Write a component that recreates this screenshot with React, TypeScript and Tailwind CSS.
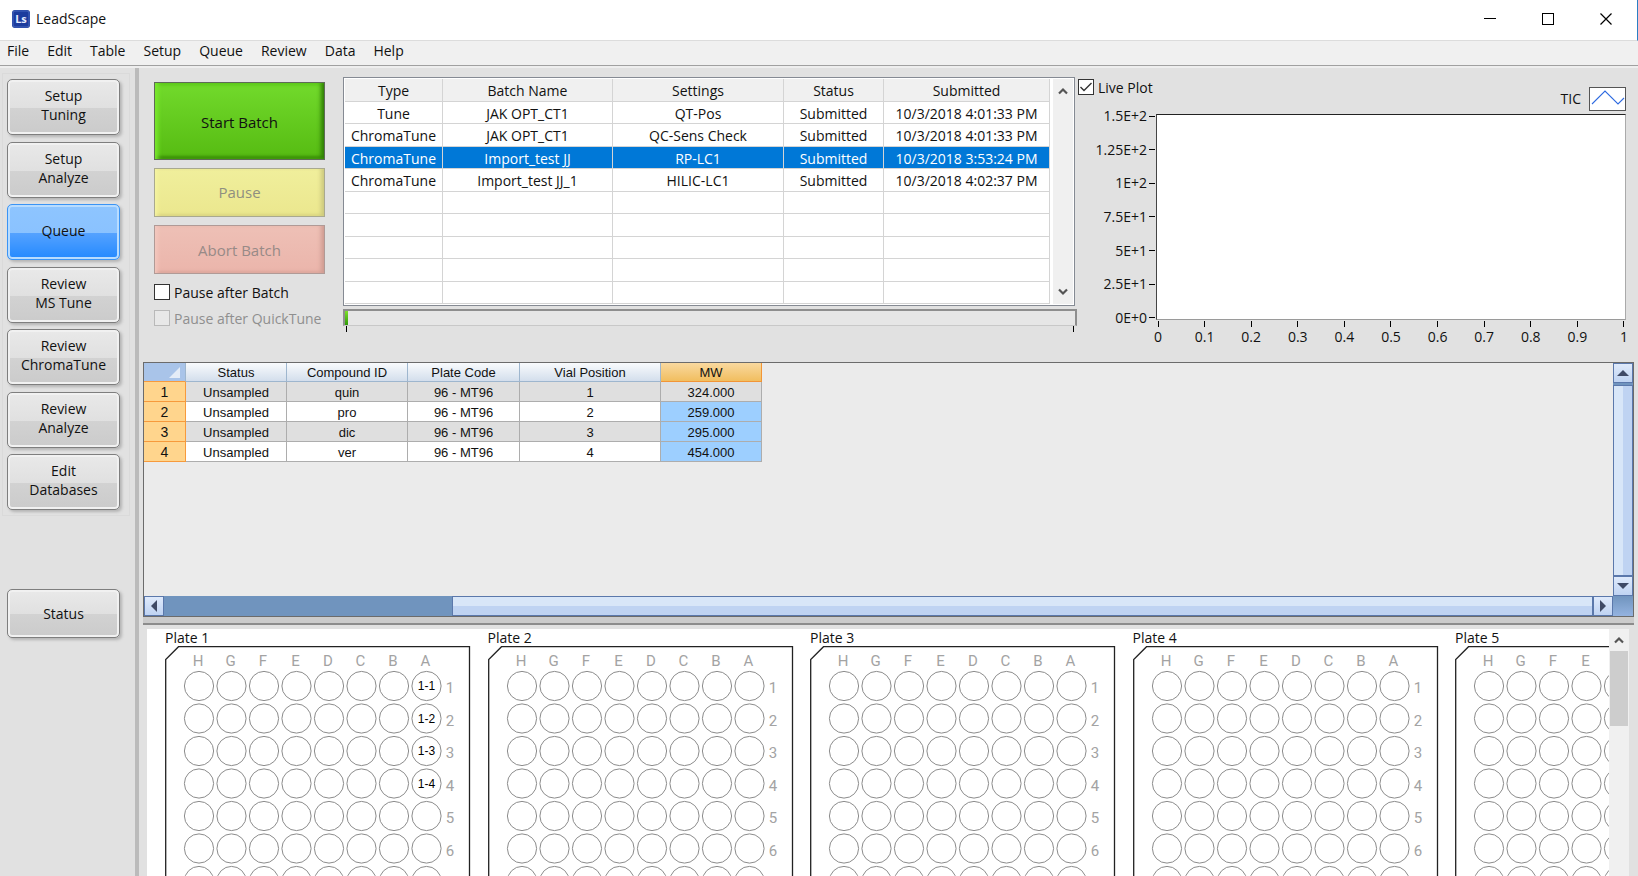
import { ReactNode, useState } from 'react'
import clsx from 'clsx'

interface Batch {
  type: string
  name: string
  settings: string
  status: string
  submitted: string
}

interface Sample {
  status: string
  compound: string
  plate: string
  vial: number
  mw: string
}

const MENU = ['File', 'Edit', 'Table', 'Setup', 'Queue', 'Review', 'Data', 'Help']

const NAV = [
  ['Setup', 'Tuning'],
  ['Setup', 'Analyze'],
  ['Queue'],
  ['Review', 'MS Tune'],
  ['Review', 'ChromaTune'],
  ['Review', 'Analyze'],
  ['Edit', 'Databases']
]

const BATCHES: Batch[] = [
  { type: 'Tune', name: 'JAK OPT_CT1', settings: 'QT-Pos', status: 'Submitted', submitted: '10/3/2018 4:01:33 PM' },
  { type: 'ChromaTune', name: 'JAK OPT_CT1', settings: 'QC-Sens Check', status: 'Submitted', submitted: '10/3/2018 4:01:33 PM' },
  { type: 'ChromaTune', name: 'Import_test JJ', settings: 'RP-LC1', status: 'Submitted', submitted: '10/3/2018 3:53:24 PM' },
  { type: 'ChromaTune', name: 'Import_test JJ_1', settings: 'HILIC-LC1', status: 'Submitted', submitted: '10/3/2018 4:02:37 PM' }
]

const SAMPLES: Sample[] = [
  { status: 'Unsampled', compound: 'quin', plate: '96 - MT96', vial: 1, mw: '324.000' },
  { status: 'Unsampled', compound: 'pro', plate: '96 - MT96', vial: 2, mw: '259.000' },
  { status: 'Unsampled', compound: 'dic', plate: '96 - MT96', vial: 3, mw: '295.000' },
  { status: 'Unsampled', compound: 'ver', plate: '96 - MT96', vial: 4, mw: '454.000' }
]

const Y_TICKS = ['1.5E+2', '1.25E+2', '1E+2', '7.5E+1', '5E+1', '2.5E+1', '0E+0']
const X_TICKS = ['0', '0.1', '0.2', '0.3', '0.4', '0.5', '0.6', '0.7', '0.8', '0.9', '1']

const TitleBar = () => (
  <header className="flex h-[41px] shrink-0 items-stretch border-b border-r border-b-[#dcdcdc] border-r-[#2a7fc4] bg-white pb-[2px] pr-[2px]">
    <div className="flex flex-1 items-center gap-[6px] pl-3">
      <svg width="18" height="18" viewBox="0 0 18 18">
        <rect width="18" height="18" rx="3" fill="#1c3c9e" />
        <rect x="1" y="1" width="16" height="16" rx="2" fill="none" stroke="#4766bd" />
        <text x="9" y="13" textAnchor="middle" fontSize="11" fontWeight="700" fill="#e6ecff">Ls</text>
      </svg>
      <h1 className="text-sm">LeadScape</h1>
    </div>
    <button aria-label="Minimize" className="flex w-[58px] items-center justify-center">
      <svg width="12" height="12"><path d="M0 5.5H12" stroke="#000" /></svg>
    </button>
    <button aria-label="Maximize" className="flex w-[58px] items-center justify-center">
      <svg width="12" height="12"><rect x=".5" y=".5" width="11" height="11" fill="none" stroke="#000" /></svg>
    </button>
    <button aria-label="Close" className="flex w-[58px] items-center justify-center">
      <svg width="12" height="12"><path d="M.5 .5L11.5 11.5M11.5 .5L.5 11.5" stroke="#000" strokeWidth="1.2" /></svg>
    </button>
  </header>
)

const MenuBar = () => (
  <nav className="flex h-[25px] shrink-0 items-center gap-[18px] border-b border-[#a0a0a0] bg-[#f0f0f0] pb-1 pl-[7px]">
    {MENU.map((m) => (
      <button key={m} className="text-sm">{m}</button>
    ))}
  </nav>
)

const NavButton = ({ active, tall = true, onClick, children }: {
  active?: boolean
  tall?: boolean
  onClick?: () => void
  children: ReactNode
}) => (
  <button
    onClick={onClick}
    className={clsx(
      'flex w-[113px] shrink-0 flex-col items-center justify-center rounded-[5px] border text-sm leading-[19px]',
      tall ? 'h-14 pb-1' : 'h-[49px]',
      active
        ? 'border-[#3a94f5] bg-[linear-gradient(#8ec5ff_0%,#8ac2ff_52%,#55a2ff_52%,#2389ff_100%)] shadow-[inset_0_0_0_2px_#b8dcff,2px_2px_3px_#b4b4b4]'
        : 'border-[#7e7e7e] bg-[linear-gradient(#e9e9e9_0%,#e0e0e0_52%,#d2d2d2_52%,#cbcbcb_100%)] shadow-[inset_0_0_0_2px_#f1f1f1,2px_2px_3px_#b4b4b4]'
    )}
  >
    {children}
  </button>
)

const Sidebar = () => {
  const [current, setCurrent] = useState(2)

  return (
    <aside className="flex w-[139px] shrink-0 flex-col border-r-4 border-[#bbbbbb] pl-[2px] pt-[5px]">
      <div className="flex h-[443px] w-[128px] flex-col justify-between border border-[#dadada] py-[5px] pl-1">
        {NAV.map((lines, i) => (
          <NavButton key={i} active={i === current} onClick={() => setCurrent(i)}>
            {lines.map((l) => (
              <span key={l}>{l}</span>
            ))}
          </NavButton>
        ))}
      </div>
      <div className="pl-[5px] pt-[73px]">
        <NavButton tall={false}>Status</NavButton>
      </div>
    </aside>
  )
}

const Check = ({ label, checked, disabled }: { label: string; checked?: boolean; disabled?: boolean }) => (
  <label className={clsx('flex h-4 items-center gap-1 text-sm', disabled && 'text-[#8f8f8f]')}>
    <span className="relative block h-4 w-4 shrink-0">
      <input
        type="checkbox"
        defaultChecked={checked}
        disabled={disabled}
        className="peer block h-4 w-4 appearance-none border border-[#333] bg-white disabled:border-[#b9b9b9] disabled:bg-[#e8e8e8]"
      />
      <svg className="pointer-events-none absolute inset-0 hidden peer-checked:block" width="16" height="16">
        <path d="M2.5 8L6 11.5L13.5 4" fill="none" stroke="#333" strokeWidth="1.4" />
      </svg>
    </span>
    <span className="whitespace-nowrap pt-[2px]">{label}</span>
  </label>
)

const BatchControls = () => (
  <div className="flex w-[171px] shrink-0 flex-col pt-[5px]">
    <button className="h-[78px] border border-[#5e6b57] bg-[linear-gradient(#72da2c,#56bb12)] pt-[2px] text-[15px] shadow-[inset_5px_0_4px_-2px_#7bea2e,inset_-5px_0_4px_-2px_#2f7d05,inset_0_-4px_3px_-1px_#3a8f08,inset_0_4px_4px_-2px_#5ccc18]">
      Start Batch
    </button>
    <button
      disabled
      className="mt-2 h-[49px] border border-[#a9a98f] bg-[linear-gradient(#f0ef9c,#ebe78e)] text-[15px] text-[#8f8f80] shadow-[inset_5px_0_4px_-3px_#f7f6a4,inset_-5px_0_4px_-2px_#ccc87e,inset_0_-3px_3px_-1px_#dbd783]"
    >
      Pause
    </button>
    <button
      disabled
      className="mt-2 h-[49px] border border-[#b09a96] bg-[linear-gradient(#eec0b6,#ebb5ab)] pt-[2px] text-[15px] text-[#988a87] shadow-[inset_5px_0_4px_-3px_#f5cbc2,inset_-5px_0_4px_-2px_#cf9c92,inset_0_-3px_3px_-1px_#dda79d]"
    >
      Abort Batch
    </button>
    <div className="mt-[10px] flex flex-col gap-[10px]">
      <Check label="Pause after Batch" />
      <Check label="Pause after QuickTune" disabled />
    </div>
  </div>
)

const Chevron = ({ down }: { down?: boolean }) => (
  <svg width="10" height="8" className={down ? 'rotate-180' : ''}>
    <path d="M1 6.5L5 2.5L9 6.5" fill="none" stroke="#555" strokeWidth="2.2" />
  </svg>
)

const BatchTable = () => {
  const [selected, setSelected] = useState(2)
  const cell = 'h-[22px] overflow-hidden whitespace-nowrap border-b border-r border-[#d4d4d4] p-0 pt-[2px] text-center font-normal'
  // the grid always shows nine lines, filled or not
  const rows = Array.from({ length: 9 }, (_, i) => BATCHES[i])

  return (
    <div className="w-[734px] shrink-0">
      <div className="flex w-[732px] border border-[#858a93] bg-white p-px">
        <table className="h-[225px] w-[705px] table-fixed border-separate border-spacing-0 text-sm leading-[19px]">
          <colgroup>
            <col className="w-[98px]" />
            <col className="w-[170px]" />
            <col className="w-[171px]" />
            <col className="w-[100px]" />
            <col className="w-[166px]" />
          </colgroup>
          <tbody>
            <tr className="bg-[#f0f0f0]">
              {['Type', 'Batch Name', 'Settings', 'Status', 'Submitted'].map((h) => (
                <th key={h} scope="col" className={cell}>{h}</th>
              ))}
            </tr>
            {rows.map((b, i) => (
              <tr
                key={i}
                onClick={() => b && setSelected(i)}
                className={i === selected ? 'bg-[#0078d7] text-white' : ''}
              >
                <td className={cell}>{b?.type}</td>
                <td className={cell}>{b?.name}</td>
                <td className={cell}>{b?.settings}</td>
                <td className={cell}>{b?.status}</td>
                <td className={cell}>{b?.submitted}</td>
              </tr>
            ))}
          </tbody>
        </table>
        <div className="ml-[3px] flex w-5 flex-col items-center justify-between bg-[#f0f0f0] py-2">
          <button aria-label="Scroll up"><Chevron /></button>
          <button aria-label="Scroll down"><Chevron down /></button>
        </div>
      </div>
      <div className="mt-[3px] flex h-[17px] border-2 border-b border-[#8e8e8e] border-b-[#c8c8c8] bg-[#e6e6e6]">
        <div className="w-[3px] bg-[linear-gradient(#7fe02c,#2f9a08)]" />
      </div>
      <div className="flex justify-between px-[3px]">
        <span className="h-[6px] w-px bg-black" />
        <span className="h-[6px] w-px bg-black" />
      </div>
    </div>
  )
}

const LivePlot = () => (
  <div className="ml-px flex min-w-0 flex-1 flex-col pr-2 text-sm">
    <div className="flex h-[34px] justify-between">
      <div className="pt-[2px]">
        <Check label="Live Plot" checked />
      </div>
      <div className="flex items-center gap-2 self-end">
        <span>TIC</span>
        <svg width="37" height="24">
          <rect x=".5" y=".5" width="36" height="23" fill="#fff" stroke="#555" />
          <path d="M3 17L16 4L29 17L35 11" fill="none" stroke="#2f6be0" strokeWidth="1.1" />
        </svg>
      </div>
    </div>
    <div className="mt-[3px] flex h-[206px]">
      <div className="-my-2 flex w-[78px] shrink-0 flex-col justify-between">
        {Y_TICKS.map((t) => (
          <div key={t} className="flex h-5 items-center justify-end gap-[2px]">
            <span>{t}</span>
            <span className="mr-px h-px w-[6px] bg-black" />
          </div>
        ))}
      </div>
      <div className="flex-1 border border-b-[#9a9a9a] border-l-[#444] border-r-[#aaa] border-t-[#222] bg-white" />
    </div>
    <div className="ml-20 mr-[2px] mt-px flex justify-between">
      {X_TICKS.map((t) => (
        <div key={t} className="flex w-0 flex-col items-center">
          <span className="h-[6px] w-px bg-black" />
          <span className="leading-[20px]">{t}</span>
        </div>
      ))}
    </div>
  </div>
)

const Arrow = ({ d }: { d: string }) => (
  <svg width="12" height="12">
    <path d={d} fill="#3f4a66" />
  </svg>
)

const SampleSheet = () => {
  const head = 'h-[19px] border-b border-r border-[#9eb6ce] bg-[linear-gradient(#f9fbfd,#d3deec)] p-0 pt-[2px] text-center font-normal leading-4'
  const cell = 'h-5 border-b border-r border-[#adadad] p-0 pt-[2px] text-center'
  const button = 'flex shrink-0 items-center justify-center border border-[#5b78ab] bg-[linear-gradient(#dfeafb,#bfd3f2)]'

  return (
    <section className="flex h-[255px] shrink-0 flex-col border border-[#6b6b6b] bg-[#ebebeb] font-['Liberation_Sans',Arial,sans-serif] text-[13px] leading-[17px]">
      <div className="flex min-h-0 flex-1">
        <div className="flex-1">
          <table className="w-[618px] table-fixed border-separate border-spacing-0">
            <colgroup>
              <col className="w-[42px]" />
              <col className="w-[101px]" />
              <col className="w-[121px]" />
              <col className="w-[112px]" />
              <col className="w-[141px]" />
              <col className="w-[101px]" />
            </colgroup>
            <thead>
              <tr>
                <td className="h-[19px] border-b border-r border-b-[#f79a3c] border-r-[#9eb6ce] bg-[#a9c4e9] p-0 pr-[5px]">
                  <svg width="11" height="11" className="ml-auto">
                    <path d="M11 0V11H0Z" fill="#e4ecf7" />
                  </svg>
                </td>
                <th className={head}>Status</th>
                <th className={head}>Compound ID</th>
                <th className={head}>Plate Code</th>
                <th className={head}>Vial Position</th>
                <th className="h-[19px] border-b border-r border-[#f29536] bg-[linear-gradient(#f9d99f,#f1be5f)] p-0 pt-[2px] text-center font-normal leading-4">
                  MW
                </th>
              </tr>
            </thead>
            <tbody>
              {SAMPLES.map((s, i) => (
                <tr key={s.vial} className={i % 2 ? 'bg-white' : 'bg-[#dfdfdf]'}>
                  <th className="h-5 border-b border-r border-[#f79a3c] bg-[#ffd58d] p-0 pt-[2px] text-center text-sm font-normal leading-[17px]">
                    {i + 1}
                  </th>
                  <td className={cell}>{s.status}</td>
                  <td className={cell}>{s.compound}</td>
                  <td className={cell}>{s.plate}</td>
                  <td className={cell}>{s.vial}</td>
                  <td className={clsx(cell, i > 0 && 'bg-[#9dcfff]')}>{s.mw}</td>
                </tr>
              ))}
            </tbody>
          </table>
        </div>
        <div className="flex w-5 flex-col bg-[#7094be]">
          <button aria-label="Scroll up" className={clsx(button, 'h-5')}>
            <Arrow d="M6 3L12 9H0Z" />
          </button>
          <div className="mt-[2px] flex-1 border border-[#5b78ab] bg-[linear-gradient(90deg,#d8e6f8_50%,#bfd3f2_50%)]" />
          <button aria-label="Scroll down" className={clsx(button, 'h-5')}>
            <Arrow d="M0 3H12L6 9Z" />
          </button>
        </div>
      </div>
      <div className="flex h-5 bg-[#7094be]">
        <button aria-label="Scroll left" className={clsx(button, 'w-5')}>
          <Arrow d="M9 0V12L3 6Z" />
        </button>
        <div className="ml-[288px] flex-1 border border-[#5b78ab] bg-[linear-gradient(#d8e6f8_50%,#bfd3f2_50%)]" />
        <button aria-label="Scroll right" className={clsx(button, 'w-5')}>
          <Arrow d="M3 0V12L9 6Z" />
        </button>
        <div className="w-5 bg-[linear-gradient(#7094be,#94b3e0)]" />
      </div>
    </section>
  )
}

const Plate = ({ index, columns, wells = 0 }: { index: number; columns: string; wells?: number }) => {
  const pitch = 32.5

  return (
    <figure className="w-[306px] shrink-0">
      <figcaption className="h-[17px] text-sm leading-[18px]">Plate {index}</figcaption>
      <svg width="306" height="440" className="block font-[Roboto,sans-serif]">
        <path d="M13.5 .7H304.5V438H.7V13.5Z" fill="none" stroke="#222" strokeWidth="1.3" />
        {columns.split('').map((c, x) => (
          <text key={c} x={33 + x * pitch} y={20} textAnchor="middle" fontSize="15" fill="#a3a3a3">{c}</text>
        ))}
        {Array.from({ length: 7 }, (_, y) => (
          <g key={y}>
            {Array.from({ length: 8 }, (_, x) => (
              <circle key={x} cx={34 + x * pitch} cy={40 + y * pitch} r="14.6" fill="none" stroke="#8c8c8c" />
            ))}
            {y < 6 && columns.endsWith('A') && (
              <text x={285} y={47 + y * pitch} textAnchor="middle" fontSize="15" fill="#a3a3a3">{y + 1}</text>
            )}
            {y < wells && (
              <text
                x={34 + 7 * pitch}
                y={44 + y * pitch}
                textAnchor="middle"
                fontSize="12"
                fill="#000"
                className="font-['Liberation_Sans',Arial,sans-serif]"
              >
                {index}-{y + 1}
              </text>
            )}
          </g>
        ))}
      </svg>
    </figure>
  )
}

const PlatePanel = () => (
  <section className="ml-1 mr-[5px] mt-1 flex min-h-0 flex-1">
    <div className="min-w-0 flex-1 overflow-hidden bg-white pl-[18px]">
      <div className="flex w-[1596px] justify-between">
        {[1, 2, 3, 4, 5].map((n) => (
          <Plate key={n} index={n} columns={n < 5 ? 'HGFEDCBA' : 'HGFE'} wells={n === 1 ? 4 : 0} />
        ))}
      </div>
    </div>
    <div className="flex w-5 flex-col items-center bg-[#f0f0f0]">
      <button aria-label="Scroll up" className="flex h-[22px] items-center justify-center">
        <Chevron />
      </button>
      <div className="h-[75px] w-[18px] bg-[#cdcdcd]" />
    </div>
  </section>
)

const App = () => (
  <div className="flex h-screen flex-col overflow-hidden bg-[#e1e1e1] font-['Open_Sans','Noto_Sans',sans-serif] text-[#111]">
    <TitleBar />
    <MenuBar />
    <div className="flex min-h-0 flex-1 border-t-2 border-[#eeeeee]">
      <Sidebar />
      <main className="flex min-w-0 flex-1 flex-col pl-1 pr-1">
        <div className="flex h-[294px] shrink-0 pl-[11px] pt-[9px]">
          <BatchControls />
          <div className="w-[18px] shrink-0" />
          <BatchTable />
          <LivePlot />
        </div>
        <SampleSheet />
        <div className="h-2 shrink-0 border-b-2 border-[#8c8c8c] bg-[#cbcbcb]" />
        <PlatePanel />
      </main>
    </div>
  </div>
)

export default App
